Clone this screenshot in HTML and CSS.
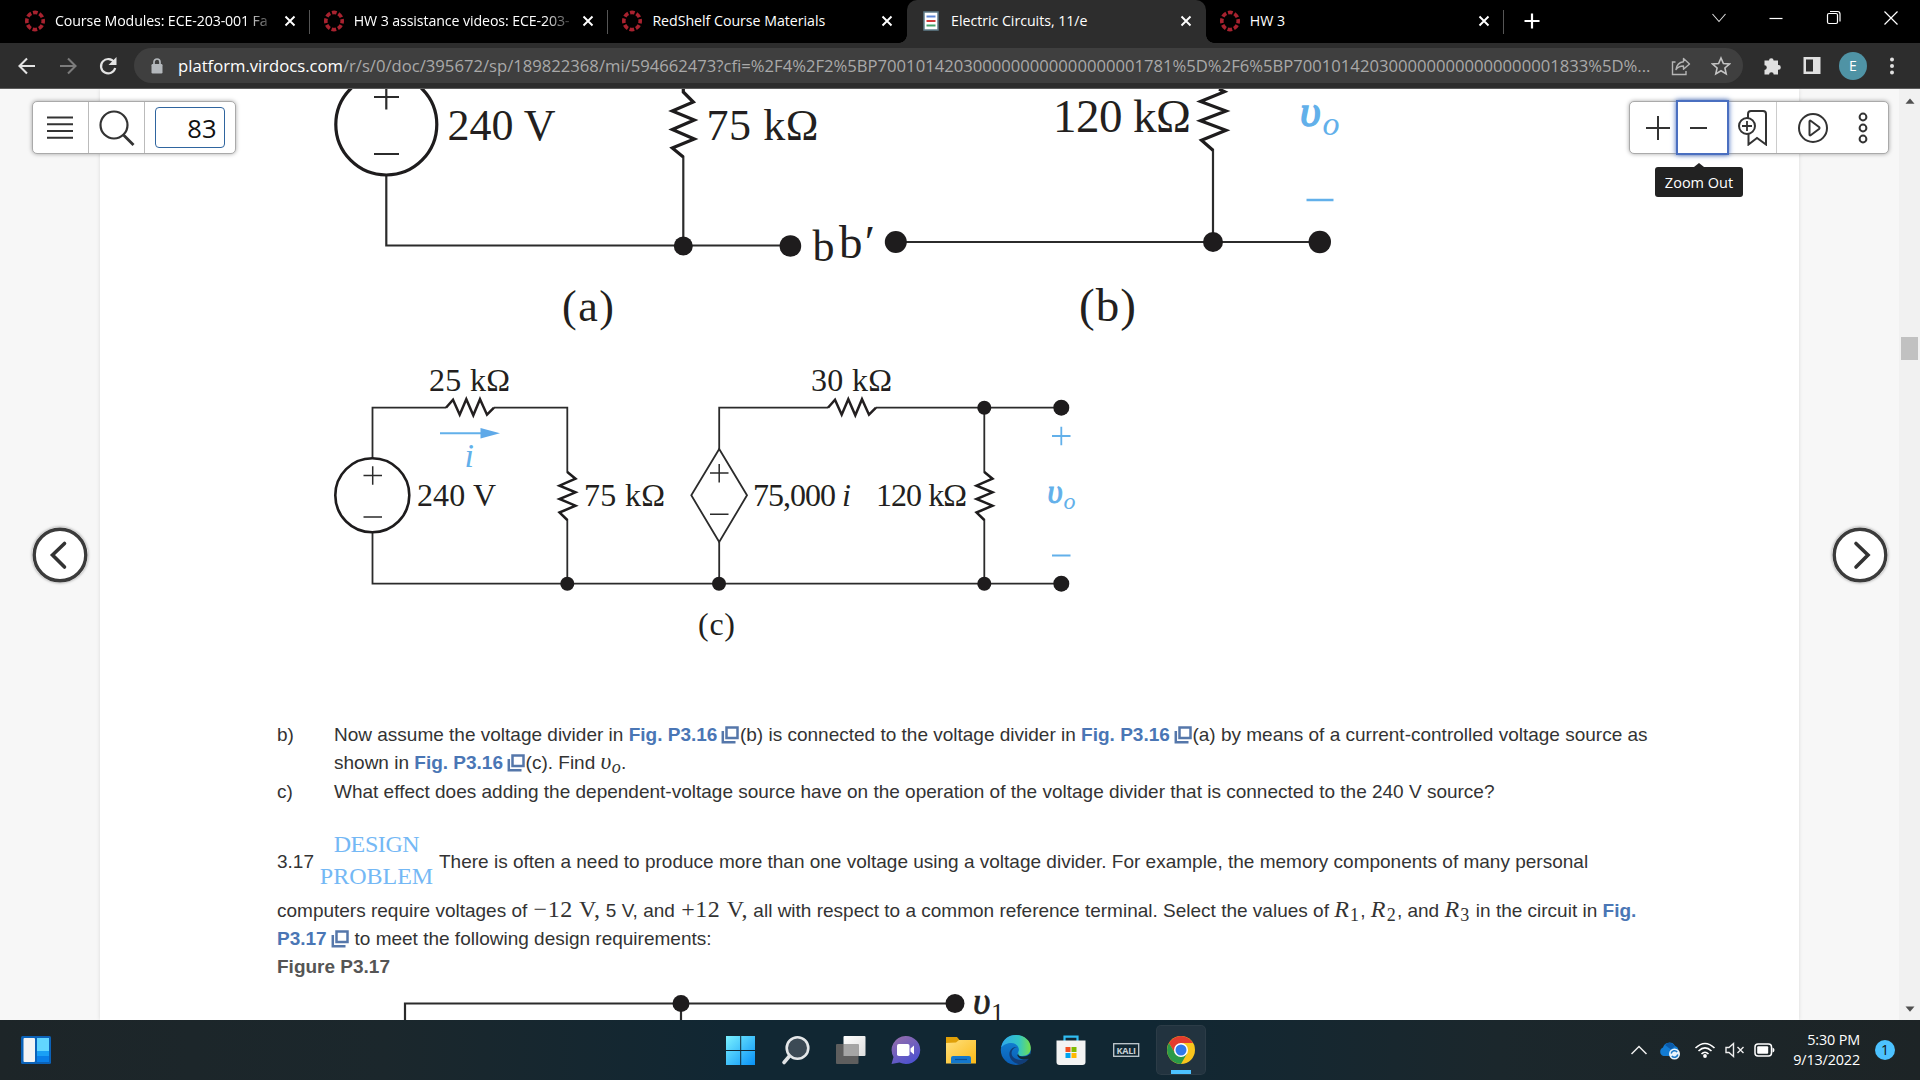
FILE: index.html
```html
<!DOCTYPE html>
<html lang="en">
<head>
<meta charset="utf-8">
<title>Electric Circuits, 11/e</title>
<link rel="stylesheet" href="styles.css">
</head>
<body>
<svg class="defs" aria-hidden="true">
  <defs>
    <symbol id="canvas" viewBox="0 0 22 24"><g fill="none" stroke="#a8222f"><ellipse cx="11" cy="12" rx="8.2" ry="8.6" stroke-width="3.6" stroke-dasharray="4.700 1.900" stroke-dashoffset="2.300"/></g></symbol>
    <symbol id="close" viewBox="0 0 12 12"><path d="M1.500 1.500 10.500 10.500M10.500 1.500 1.500 10.500" stroke="#fff" stroke-width="1.900" fill="none"/></symbol>
    <symbol id="pop" viewBox="0 0 18 18"><path d="M5.500 1.500h11v10.500h-11zM1.800 5v11.200H14.500" fill="none" stroke="#5577aa" stroke-width="2.500"/></symbol>
    <symbol id="hres" viewBox="0 0 48 20" overflow="visible"><path d="M0 10 7 2l6.700 15L20.300 1.500l7 16L34 1.500 41 17l7-7" fill="none" stroke="#231f20" stroke-width="2.500"/></symbol>
  </defs>
</svg>

<header class="tabs">
  <div class="tab"><svg class="fav"><use href="#canvas"/></svg><span class="title fade t1">Course Modules: ECE-203-001 Fa</span><svg class="x"><use href="#close"/></svg></div>
  <div class="tab"><svg class="fav"><use href="#canvas"/></svg><span class="title fade t2">HW 3 assistance videos: ECE-203-</span><svg class="x"><use href="#close"/></svg></div>
  <div class="tab nosep"><svg class="fav"><use href="#canvas"/></svg><span class="title">RedShelf Course Materials</span><svg class="x"><use href="#close"/></svg></div>
  <div class="tab active"><svg class="fav" viewBox="0 0 22 24"><path d="M4 3h14v18H4z" fill="#fff" stroke="#607d8b" stroke-width="1.500"/><path d="M6.500 7.500h9" stroke="#5c86d6" stroke-width="2"/><path d="M6.500 12h9" stroke="#d33b3b" stroke-width="2"/><path d="M6.500 16.500h9" stroke="#43a36b" stroke-width="2"/></svg><span class="title">Electric Circuits, 11/e</span><svg class="x"><use href="#close"/></svg></div>
  <div class="tab"><svg class="fav"><use href="#canvas"/></svg><span class="title">HW 3</span><svg class="x"><use href="#close"/></svg></div>
  <svg class="plus" viewBox="0 0 16 16"><path d="M8 .5v15M.5 8h15" stroke="#fff" stroke-width="2.200"/></svg>
  <div class="winbtns">
    <svg viewBox="0 0 20 20"><path d="M3.500 6 10 13.500 16.500 6" fill="none" stroke="#ddd" stroke-width="1.100"/></svg>
    <svg viewBox="0 0 20 20"><path d="M3.500 10.500h13" stroke="#fff" stroke-width="1.200"/></svg>
    <svg viewBox="0 0 20 20"><rect x="3.500" y="5.500" width="10" height="10" rx="1.500" fill="none" stroke="#fff" stroke-width="1.200"/><path d="M6 3.500h7.500q2.500 0 2.500 2.500v7.500" fill="none" stroke="#fff" stroke-width="1.200"/></svg>
    <svg viewBox="0 0 20 20"><path d="M3.500 3.500l13 13M16.500 3.500l-13 13" stroke="#fff" stroke-width="1.200"/></svg>
  </div>
</header>

<nav class="toolbar">
  <svg class="nav" viewBox="0 0 20 20"><path d="M18 10H3M10 2.500 2.500 10l7.500 7.500" fill="none" stroke="#e3e3e3" stroke-width="2.100"/></svg>
  <svg class="nav" viewBox="0 0 20 20"><path d="M2 10h15M10 2.500 17.500 10 10 17.500" fill="none" stroke="#7c7c7c" stroke-width="2.100"/></svg>
  <svg class="nav" viewBox="0 0 20 20"><path d="M16.200 6.200A7.200 7.200 0 1 0 17.200 12" fill="none" stroke="#e3e3e3" stroke-width="2.200"/><path d="M18.500 1v8h-8z" fill="#e3e3e3"/></svg>
  <div class="omni">
    <svg class="lock" viewBox="0 0 12 16"><rect x=".5" y="6" width="11" height="9.500" rx="1.200" fill="#b4b8bc"/><path d="M3 6.500V4a3 3 0 0 1 6 0v2.500" fill="none" stroke="#b4b8bc" stroke-width="1.700"/></svg>
    <span class="url"><b>platform.virdocs.com</b>/r/s/0/doc/395672/sp/189822368/mi/594662473?cfi=%2F4%2F2%5BP7001014203000000000000000001781%5D%2F6%5BP7001014203000000000000000001833%5D%...</span>
    <svg class="share" viewBox="0 0 20 20"><path d="M4.500 6H1.500v12.500h13.500V15" fill="none" stroke="#b5b5b5" stroke-width="1.400"/><path d="M12.500 2.500 18.500 8l-6 5.200V10Q7.500 10 5 13.500 6 6.500 12.500 5.700z" fill="none" stroke="#b5b5b5" stroke-width="1.400" stroke-linejoin="round"/></svg>
    <svg class="star" viewBox="0 0 20 20"><path d="M10 2l2.400 5.500 6 .5-4.500 4 1.300 5.900L10 14.800 4.800 17.900 6.100 12l-4.500-4 6-.5z" fill="none" stroke="#c4c4c4" stroke-width="1.600"/></svg>
  </div>
  <svg class="ext" viewBox="0 0 20 20"><path d="M7 4.500a2.300 2.300 0 1 1 4.600 0H16v4.600h.5a2.300 2.300 0 0 1 0 4.600H16v4.800h-4.300a2.300 2.300 0 0 0-4.600 0H2.500v-4.600a2.300 2.300 0 0 0 0-4.600V4.500z" fill="#e0e0e0"/></svg>
  <svg class="ext" viewBox="0 0 20 20"><path d="M1.500 1h17v17h-17zM4 3.500v12h7v-12z" fill="#e0e0e0" fill-rule="evenodd"/></svg>
  <span class="avatar">E</span>
  <svg class="ext" viewBox="0 0 20 20"><g fill="#e0e0e0"><circle cx="10" cy="3.500" r="2"/><circle cx="10" cy="10" r="2"/><circle cx="10" cy="16.500" r="2"/></g></svg>
</nav>

<main class="viewer">
  <section class="page">
    <svg class="figures" viewBox="100 89 1699 626" width="1699" height="626">
      <g fill="none" stroke="#2b2b2b" stroke-width="2.200">
        <path d="M386.300 175v70.500H790M683.300 156v90M896 242h424M1213 149v93"/>
        <path d="M372.500 458v-50.300H446M494 407.700h73.300v65M567.300 519v64.700M372.500 533v50.700H1061M719.200 542v42M719.200 449v-41.300H828M876 407.700h185M984.300 407.700v65M984.300 519v64.700" stroke-width="1.800"/>
        <path d="M719.200 449 747 495.300 719.200 542 691.300 495.300z" stroke-width="1.800"/>
        <path d="M374 97h25M386.300 89v20.500M374 154h25"/>
        <path d="M363.500 475.500h18.500M372.700 466.200v18.500M363.500 517h18.500M710 473h18.500M719.200 464v18.500M710 514.300h18.500" stroke-width="1.500"/>
      </g>
      <g fill="none" stroke="#1e1c1d">
        <circle cx="386.300" cy="124.500" r="50.500" stroke-width="3.200"/>
        <circle cx="372.300" cy="495.300" r="37" stroke-width="2.600"/>
        <path d="M683.300 89v3l10 10-21 9 22 9-22 9.500 22 9.500-22 9 11 9" stroke-width="3.200"/>
        <path d="M1219 89l5.500 2.700-24 9.700 25.500 9.700-25.500 9.600L1226 130.300l-24.500 10 11.500 10" stroke-width="3.200"/>
        <path id="vr" d="M567.300 472l8.200 6.700-16 7 16 6.600-16 6.700 16 6.700-16 6.800 7.800 7.500" stroke-width="2.500"/>
        <use href="#vr" x="417"/>
      </g>
      <use href="#hres" x="446" y="397.700" width="48" height="20"/>
      <use href="#hres" x="828" y="397.700" width="48" height="20"/>
      <g fill="#1e1c1d">
        <circle cx="683.300" cy="246" r="9.500"/><circle cx="790.400" cy="246" r="10.800"/><circle cx="895.800" cy="242" r="11"/><circle cx="1213" cy="242" r="10"/><circle cx="1319.800" cy="242" r="11.200"/>
        <circle cx="567.300" cy="583.700" r="7"/><circle cx="719" cy="583.700" r="7"/><circle cx="984.300" cy="583.700" r="7"/><circle cx="984.300" cy="407.700" r="7"/><circle cx="1061.300" cy="407.700" r="8"/><circle cx="1061.300" cy="583.700" r="8"/>
      </g>
      <g stroke="#62b0ea" stroke-width="2.500" fill="none">
        <path d="M1306.500 200h27"/>
        <path d="M1052 436h18.500M1061.300 426.700v18.600M1052 555.500h18.500" stroke-width="1.800"/>
        <path d="M440 433.300h44" stroke-width="2"/>
      </g>
      <path d="M480.500 428v10.500l19.500-5.200z" fill="#5fa9e8"/>
      <g class="fig big">
        <text x="447.500" y="139.500" textLength="108">240 V</text>
        <text x="706.500" y="139.500" textLength="112">75 kΩ</text>
        <text x="1053" y="131.500" textLength="138" class="b47">120 kΩ</text>
        <text x="812.500" y="260.500">b</text><text x="839" y="257.500" class="b47" textLength="36">b′</text>
        <text x="562" y="320.700" textLength="52">(a)</text>
        <text x="1079" y="320.500" textLength="57" class="b47">(b)</text>
      </g>
      <g class="fig small">
        <text x="429" y="390.700" textLength="81">25 kΩ</text>
        <text x="811" y="390.700" textLength="81">30 kΩ</text>
        <text x="417" y="506" textLength="79">240 V</text>
        <text x="584" y="506" textLength="81">75 kΩ</text>
        <text x="753" y="506" textLength="98">75,000 <tspan class="it">i</tspan></text>
        <text x="876" y="506" textLength="91">120 kΩ</text>
        <text x="698" y="634.500" textLength="37">(c)</text>
      </g>
      <g class="fig blue">
        <text x="1300" y="125.500" class="v1">υ</text><text x="1322.500" y="135" class="o1">o</text>
        <text x="1047.500" y="502.500" class="v2">υ</text><text x="1063.500" y="509" class="o2">o</text>
        <text x="464.500" y="467" class="i">i</text>
      </g>
    </svg>

    <div class="prose">
      <div class="item"><span>b)</span><p><span class="ln b1">Now assume the voltage divider in <a>Fig. P3.16 <svg><use href="#pop"/></svg></a>(b) is connected to the voltage divider in <a>Fig. P3.16 <svg><use href="#pop"/></svg></a>(a) by means of a current-controlled voltage source as</span><span class="ln">shown in <a>Fig. P3.16 <svg><use href="#pop"/></svg></a>(c). Find <i class="m">υ<sub>o</sub></i>.</span></p></div>
      <div class="item second"><span>c)</span><p><span class="ln">What effect does adding the dependent-voltage source have on the operation of the voltage divider that is connected to the 240 V source?</span></p></div>
      <div class="problem"><span class="num">3.17</span><span class="design"><span class="d1">DESIGN</span><span>PROBLEM</span></span><span class="ln">There is often a need to produce more than one voltage using a voltage divider. For example, the memory components of many personal</span></div>
      <div class="ln comp">computers require voltages of <span class="m volt">−12 V,</span> 5 V, and <span class="m volt">+12 V,</span> all with respect to a common reference terminal. Select the values of <span class="m res"><i>R</i><sub>1</sub></span>, <span class="m res"><i>R</i><sub>2</sub></span>, and <span class="m res"><i>R</i><sub>3</sub></span> in the circuit in <a>Fig.</a></div>
      <div class="ln"><a>P3.17 <svg><use href="#pop"/></svg></a> to meet the following design requirements:</div>
      <div class="ln cap">Figure P3.17</div>
    </div>

    <svg class="fig317" viewBox="100 983 1699 37" width="1699" height="37">
      <path d="M405 1020v-16.500h550M681 1003.500v17" fill="none" stroke="#2b2b2b" stroke-width="2.200"/>
      <circle cx="681" cy="1003.500" r="8.500" fill="#1e1c1d"/><circle cx="955" cy="1003.500" r="9.500" fill="#1e1c1d"/>
      <g class="fig"><text x="973" y="1013.500" class="v3">υ</text><text x="991" y="1021" class="s3">1</text></g>
    </svg>
  </section>

  <aside class="scroll"><svg viewBox="0 0 12 8"><path d="M0 7.500 6 .5l6 7z" fill="#505050"/></svg><span class="thumb"></span><svg class="down" viewBox="0 0 12 8"><path d="M0 .5h12L6 7.500z" fill="#505050"/></svg></aside>

  <div class="box left">
    <span class="cell first"><svg width="26" height="26" viewBox="0 0 26 26"><path d="M0 2.500h26M0 9.200h26M0 16h26M0 22.700h26" stroke="#333" stroke-width="2"/></svg></span>
    <span class="cell"><svg width="36" height="36" viewBox="0 0 36 36"><circle cx="15" cy="15" r="13.500" fill="none" stroke="#333" stroke-width="2.200"/><path d="M24.500 25 34.500 35" stroke="#333" stroke-width="2.800"/></svg></span>
    <span class="cell last"><span class="pageno">83</span></span>
  </div>

  <div class="box right">
    <span class="plusb"><svg width="24" height="24" viewBox="0 0 24 24"><path d="M12 0v24M0 12h24" stroke="#333" stroke-width="2"/></svg></span>
    <span class="minusb"><svg width="17" height="4" viewBox="0 0 17 4"><path d="M0 2h17" stroke="#333" stroke-width="2"/></svg></span>
    <span class="bookb"><svg width="30" height="36" viewBox="0 0 30 36"><path d="M10 8V4q0-3 3-3h12q3 0 3 3v30.500L19 28l-8.500 6.500V24" fill="none" stroke="#333" stroke-width="2"/><circle cx="9" cy="16" r="8" fill="#fff" stroke="#333" stroke-width="2"/><path d="M9 11v10M4 16h10" stroke="#333" stroke-width="1.800"/></svg></span>
    <span class="playb"><svg width="32" height="32" viewBox="0 0 32 32"><circle cx="16" cy="16" r="14" fill="none" stroke="#333" stroke-width="2"/><path d="M12.500 9.500q0-1.500 1.500-.5l8 6q1 1 0 2l-8 6q-1.500 1-1.500-.5z" fill="none" stroke="#333" stroke-width="2"/></svg></span>
    <span class="moreb"><svg width="12" height="34" viewBox="0 0 12 34"><g fill="none" stroke="#333" stroke-width="2"><circle cx="6" cy="6" r="3.400"/><circle cx="6" cy="17" r="3.400"/><circle cx="6" cy="28" r="3.400"/></g></svg></span>
  </div>
  <div class="tip">Zoom Out</div>

  <span class="round prev"><svg viewBox="0 0 56 56"><circle cx="28" cy="28" r="25.800" fill="#fff" stroke="#3b3b3b" stroke-width="3.400"/><path d="M32.500 16.500 20.500 28l12 12" fill="none" stroke="#333" stroke-width="3.600" stroke-linecap="round"/></svg></span>
  <span class="round next"><svg viewBox="0 0 56 56"><circle cx="28" cy="28" r="25.800" fill="#fff" stroke="#3b3b3b" stroke-width="3.400"/><path d="M24 16.500 36 28 24 40" fill="none" stroke="#333" stroke-width="3.600" stroke-linecap="round"/></svg></span>
</main>

<footer class="taskbar">
  <div class="side"><svg width="30" height="28" viewBox="0 0 30 28"><rect width="30" height="28" rx="1.500" fill="#0b62b8"/><rect x="2.500" y="2" width="11.500" height="24" rx="1" fill="#f3f3f3"/><path d="M16 2h12v13H16z" fill="#62d6ff"/><path d="M16 15h12v5H16z" fill="#1aa0f5"/><path d="M16 20h12v6H16z" fill="#0a7fe8"/></svg></div>
  <div class="apps">
    <svg viewBox="0 0 50 50"><defs><linearGradient id="w" x2="1" y2="1" gradientUnits="userSpaceOnUse" gradientTransform="translate(10 11) scale(29)"><stop stop-color="#7cf3ff"/><stop offset="1" stop-color="#0a93f7"/></linearGradient></defs><path d="M11 11h14.200v14H11zM26.200 11H40v14H26.200zM11 26h14.200v14H11zM26.200 26H40v14H26.200z" fill="url(#w)"/></svg>
    <svg viewBox="0 0 50 50"><circle cx="27.500" cy="23" r="10.800" fill="#3c4a55" stroke="#e4e7e9" stroke-width="2.600"/><path d="M19.500 31 14 37.500" stroke="#dfe2e4" stroke-width="3.600" stroke-linecap="round"/></svg>
    <svg viewBox="0 0 50 50"><defs><linearGradient id="tv" x2="1" y2="1"><stop stop-color="#fff"/><stop offset="1" stop-color="#ddd"/></linearGradient></defs><rect x="18.500" y="11" width="22" height="20" rx="1" fill="url(#tv)"/><rect x="11" y="19" width="22.500" height="20" rx="1" fill="#5e5e5e"/><path d="M18.500 19h15v12h-15z" fill="#a5a5a5"/></svg>
    <svg viewBox="0 0 50 50"><defs><linearGradient id="ch" x2=".6" y2="1"><stop stop-color="#9a6fa8"/><stop offset="1" stop-color="#4f52cf"/></linearGradient></defs><path d="M25.500 11a14.300 14 0 1 1-6 26.500L11.500 39l2-7A14.300 14 0 0 1 25.500 11z" fill="url(#ch)"/><rect x="17" y="19" width="12.500" height="12" rx="1.800" fill="#fff"/><path d="M30.500 23.500 34 20.500v9L30.500 26.500z" fill="#fff"/></svg>
    <svg viewBox="0 0 50 50"><defs><linearGradient id="fo" x2="1" y2="1"><stop stop-color="#ffe07d"/><stop offset="1" stop-color="#fbb916"/></linearGradient></defs><path d="M11 12h11l2.500 3v3H11z" fill="#e0a008"/><path d="M11 18l10-.5 3-2.500h17v23.500H11z" fill="url(#fo)"/><path d="M16 38.500V33q0-2 2-2h16q2 0 2 2v5.500z" fill="#1478cc"/><path d="M20 34.500h12" stroke="#0c4f96" stroke-width="1.200"/></svg>
    <svg viewBox="0 0 50 50"><defs><linearGradient id="e1"><stop stop-color="#2fa8ec"/><stop offset=".6" stop-color="#33c6c4"/><stop offset="1" stop-color="#74e04c"/></linearGradient><linearGradient id="e2" x2="0" y2="1"><stop stop-color="#1387d8"/><stop offset="1" stop-color="#0a5cb4"/></linearGradient></defs><g transform="translate(.8)"><circle cx="25" cy="25" r="15" fill="url(#e2)"/><path d="M10.500 22C12 14 18 10 25 10c9 0 15 6 15 13 0 5-3.500 8-8.500 8-4 0-5.500-1.500-4-4 2-4-1.500-9-7-9-4 0-8 2-9.500 4z" fill="url(#e1)"/><path d="M26.500 22c-5 1-7 5-5 9 2.500 4 9 5 15.500 3l1 0q-3 4-8 5.500c-8-1-13-7-11-13 1-3 4-5 7.500-4.500z" fill="#123e78"/><path d="M28 27q-2 4 3 4.500 5 .5 8-2.500l1.500 1.500-2 3q-9 3-12-3z" fill="#122a37"/></g></svg>
    <svg viewBox="0 0 50 50"><path d="M18.500 17v-5.300h13V17" fill="none" stroke="#30bdf2" stroke-width="2.200"/><path d="M10.500 15.500h29V37q0 3-3 3h-23q-3 0-3-3z" fill="#f3f3f3"/><path d="M19.500 22h5v5h-5z" fill="#f25022"/><path d="M25.500 22h5v5h-5z" fill="#7fba00"/><path d="M19.500 28h5v5h-5z" fill="#00a4ef"/><path d="M25.500 28h5v5h-5z" fill="#ffb900"/></svg>
    <svg viewBox="0 0 50 50"><rect x="12.700" y="18.700" width="25" height="12.600" fill="none" stroke="#c3ccd1" stroke-width="1.300"/><text x="15.500" y="28.500" class="kali" textLength="19.500">KALI</text></svg>
    <span class="chrome"><svg viewBox="0 0 50 50"><circle cx="25" cy="25" r="14" fill="#f9c51c"/><path d="M25 18h12.100A14 14 0 0 0 12.900 18L19 28z" fill="#e33b2e"/><path d="M12.900 18A14 14 0 0 0 25 39l6-10.500L25 25l-6 3z" fill="#2a9a48"/><circle cx="25" cy="25" r="7" fill="#fff"/><circle cx="25" cy="25" r="5.500" fill="#3079ea"/></svg></span>
  </div>
  <div class="tray">
    <svg width="20" height="20" viewBox="0 0 20 20"><path d="M2.500 14 10 6.500 17.500 14" fill="none" stroke="#eee" stroke-width="1.500"/></svg>
    <svg class="od" width="22" height="20" viewBox="0 0 22 20"><path d="M4.500 16A4.500 4.500 0 0 1 4 7.500 6.500 6.500 0 0 1 16 6q3.500 1 3.500 5v5z" fill="#137bd2"/><path d="M6 5q5-5 10 1l-4 3.500z" fill="#0b5aa8"/><circle cx="15.500" cy="14" r="5.500" fill="#e9f3fb"/><path d="M12.200 13.500a3.400 3.400 0 0 1 6-1.500M18.800 14.500a3.400 3.400 0 0 1-6 1.500" fill="none" stroke="#1a78c8" stroke-width="1.500"/></svg>
    <svg class="wf" width="22" height="20" viewBox="0 0 22 20"><g fill="none" stroke="#fff" stroke-width="1.600"><path d="M1.500 8q9.500-9 19 0M4.500 11q6.500-6.300 13 0M7.500 14q3.500-3.600 7 0"/></g><circle cx="11" cy="16" r="1.900" fill="#fff"/></svg>
    <svg class="mu" width="20" height="20" viewBox="0 0 20 20"><path d="M1 7.500h3L8.500 3.500v13L4 12.500H1zM12.500 7l6 6M18.500 7l-6 6" fill="none" stroke="#eee" stroke-width="1.400"/></svg>
    <svg class="ba" width="22" height="16" viewBox="0 0 22 16"><rect x="1" y="2" width="16.500" height="12" rx="3" fill="none" stroke="#fff" stroke-width="1.500"/><rect x="3.200" y="4.200" width="11" height="7.600" rx="1" fill="#fff"/><path d="M18.500 5.500q2 .5 2 2.500t-2 2.500" fill="#fff"/></svg>
    <div class="clock"><span>5:30 PM</span><span>9/13/2022</span></div>
    <span class="badge">1</span>
  </div>
</footer>
</body>
</html>
```

FILE: styles.css
```css
* { box-sizing: border-box; }
body { margin: 0; width: 1920px; height: 1080px; overflow: hidden; display: flex; flex-direction: column; background: #fff; font-family: "Open Sans", "Noto Sans", sans-serif; }
svg { display: block; flex: none; }
.defs { position: absolute; width: 0; height: 0; }

/* tab strip */
.tabs { height: 43px; background: #000; display: flex; padding-left: 11px; flex: none; }
.tab { width: 298.700px; flex: none; display: flex; align-items: center; padding: 0 13px 2px 13px; background: linear-gradient(#555, #555) right 10px / 1px 24px no-repeat; }
.tab.nosep { background: none; }
.tab.active { background: #2d2d2d; border-radius: 10px 10px 0 0; position: relative; }
.tab.active::before, .tab.active::after { content: ""; position: absolute; bottom: 0; width: 8px; height: 8px; }
.tab.active::before { left: -8px; background: radial-gradient(circle at 0 0, #000 7.500px, #2d2d2d 8px); }
.tab.active::after { right: -8px; background: radial-gradient(circle at 100% 0, #000 7.500px, #2d2d2d 8px); }
.fav { width: 22px; height: 24px; margin-right: 9px; }
.title { color: #fff; font-size: 14.200px; letter-spacing: -.030px; white-space: nowrap; width: 219px; overflow: hidden; margin-right: 9.500px; }
.title.t1 { letter-spacing: -0.120px; }
.title.t2 { letter-spacing: -0.100px; }
.title.fade { -webkit-mask-image: linear-gradient(90deg, #000 190px, rgba(0,0,0,.1) 219px); mask-image: linear-gradient(90deg, #000 190px, rgba(0,0,0,.1) 219px); }
.x { width: 12px; height: 12px; }
.plus { width: 16px; height: 16px; margin: 13px 0 0 19.500px; }
.winbtns { display: flex; gap: 37.300px; margin: 8px 19px 0 auto; }
.winbtns svg { width: 20px; height: 20px; }

/* address bar */
.toolbar { height: 46px; flex: none; background: #2d2d2d; border-bottom: 1px solid #5c5c5c; display: flex; align-items: center; padding: 0 18px 0 17px; }
.nav { width: 20px; height: 20px; margin-right: 20.500px; }
.nav:nth-child(3) { margin-right: 16px; }
.omni { width: 1609px; height: 35px; border-radius: 18px; background: #3f3f3f; display: flex; align-items: center; padding: 0 12px 0 17px; margin-right: 18px; flex: none; }
.lock { width: 12px; height: 16px; margin-right: 15px; }
.url { color: #a9a9a9; font-size: 16.650px; white-space: nowrap; width: 1476px; margin-right: 20px; }
.url b { color: #fff; font-weight: 400; }
.share, .star { width: 20px; height: 20px; }
.share { margin: 0 20px 0 0; }
.ext { width: 20px; height: 20px; margin-right: 20px; }
.toolbar > .omni + .ext { margin-left: 1px; }
.avatar { width: 28px; height: 28px; border-radius: 50%; background: #4f93a5; color: #fff; font-size: 14px; line-height: 28px; text-align: center; margin: 0 19px 0 -3px; flex: none; }
.toolbar > .ext:last-child { margin: 0 0 0 -4px; }

/* reader */
.viewer { height: 931px; flex: none; position: relative; display: flex; background: #f7f7f7; }
.page { width: 1699px; margin-left: 100px; background: #fff; box-shadow: 0 0 4px rgba(0,0,0,.12); display: flex; flex-direction: column; overflow: hidden; clip-path: inset(0 -6px 0 -6px); }
.scroll { width: 21px; margin-left: auto; background: #f1f1f1; display: flex; flex-direction: column; align-items: center; padding: 9px 0 8px; }
.scroll svg { width: 12px; height: 6px; }
.thumb { width: 17px; height: 23px; background: #c1c1c1; margin-top: 233px; }
.scroll .down { margin-top: auto; }

.fig { font-family: "Liberation Serif", serif; fill: #231f20; }
.big { font-size: 44px; }
.b47 { font-size: 47px; }
.small { font-size: 32px; }
.it { font-style: italic; }
.blue { fill: #62b0ea; font-style: italic; }
.v1 { font-size: 45px; stroke: #62b0ea; stroke-width: 1.500px; } .o1 { font-size: 34px; }
.v2 { font-size: 33px; stroke: #62b0ea; stroke-width: 1px; } .o2 { font-size: 24px; }
.i { font-size: 34px; }
.v3 { font-size: 38px; font-style: italic; stroke: #231f20; stroke-width: .7px; } .s3 { font-size: 26px; }

.prose { font: 19px/28px "Liberation Sans", Arial, sans-serif; color: #333; padding-left: 177px; height: 268px; flex: none; }
.ln { display: block; white-space: nowrap; height: 28px; }
.item { display: flex; padding-top: 6px; }
.item.second { padding-top: 1px; }
.item > span { width: 57px; }
.item p { margin: 0; }
.prose a { color: #4a76b5; font-weight: bold; }
.prose a svg { display: inline-block; width: 18px; height: 18px; vertical-align: -3px; margin: 0 .5px 0 -1.200px; }
.m { font-family: "Liberation Serif", serif; font-size: 23.500px; line-height: 1; letter-spacing: .35px; }
.m sub { font-size: 18px; line-height: 0; vertical-align: -4px; }
.volt { letter-spacing: .6px; font-size: 24px; margin-left: 1px; }
.res { letter-spacing: 1.200px; font-size: 24px; }
.problem { display: flex; align-items: center; height: 72px; margin-top: 20px; }
.num { width: 43px; }
.design { width: 113px; margin: 0 6px 5px 0; display: flex; flex-direction: column; align-items: center; font: 24px/32px "Liberation Serif", serif; color: #74b8f5; }
.design .d1 { letter-spacing: -.4px; }
.comp { margin-top: -1px; }
.cap { font-weight: bold; color: #555; }

/* floating reader controls */
.box { position: absolute; top: 12px; height: 53px; display: flex; background: #fff; border: 1px solid #aaa; border-radius: 5px; box-shadow: 0 0 4px rgba(0,0,0,.35); }
.box span { display: flex; align-items: center; justify-content: center; }
.box.left { left: 32px; width: 204px; }
.cell { width: 56px; border-right: 1px solid #bbb; }
.cell.first { padding-right: 2px; }
.cell.last { width: 90px; border: 0; padding-right: 1px; }
.box .pageno { width: 70px; height: 41px; border: 1.500px solid #2f659f; border-radius: 4px; justify-content: flex-end; padding-right: 7px; font-size: 25.500px; color: #111; }
.box.right { left: 1629px; width: 260px; }
.plusb { width: 46px; padding-left: 10px; }
.minusb { width: 53px; margin: -2px 0; border: 2px solid #4a6fc0; box-shadow: 0 0 5px #3f68bd; padding-right: 8px; position: relative; }
.bookb { width: 48px; border-right: 1px solid #ccc; }
.playb { width: 72px; }
.moreb { width: 27px; }
.tip { position: absolute; left: 1655px; top: 78px; width: 88px; height: 30px; border-radius: 3px; background: #222; color: #fff; font-size: 14.500px; line-height: 31px; text-align: center; }
.tip::before { content: ""; position: absolute; left: 39px; top: -4px; border: 5px solid transparent; border-top: 0; border-bottom: 4px solid #222; }
.round { position: absolute; top: 438px; width: 56px; height: 56px; border-radius: 50%; box-shadow: 0 0 3px rgba(0,0,0,.4); }
.prev { left: 32px; } .next { left: 1832px; }

/* taskbar */
.taskbar { height: 60px; flex: none; display: grid; grid-template-columns: 715px 500px 1fr; background: linear-gradient(90deg, #1d2528, #1b272c 20%, #112733 38%, #112733 60%, #1b272c 78%, #1d2426); }
.side { padding: 16px 0 0 21px; }
.apps { display: flex; align-items: center; gap: 5.100px; }
.apps svg { width: 50px; height: 50px; }
.chrome { width: 50px; height: 50px; flex: none; background: linear-gradient(#4cc2ff, #4cc2ff) center 45px / 20px 4px no-repeat, #22333f; border-radius: 5px; box-shadow: inset 0 0 0 1px #2c3c47; }
.kali { font: bold 9px "Open Sans", sans-serif; fill: #c8d0d4; }
.tray { display: flex; align-items: center; justify-content: flex-end; padding-right: 25px; color: #fff; }
.od { margin-left: 10px; } .wf { margin-left: 13px; } .mu { margin-left: 9px; } .ba { margin-left: 9px; }
.clock { width: 84px; display: flex; flex-direction: column; text-align: right; font-size: 14.400px; line-height: 20px; letter-spacing: -.15px; margin-right: 15px; }
.badge { width: 20px; height: 20px; border-radius: 50%; background: #4cc2ff; color: #111; font-size: 14px; line-height: 20px; text-align: center; }
```
